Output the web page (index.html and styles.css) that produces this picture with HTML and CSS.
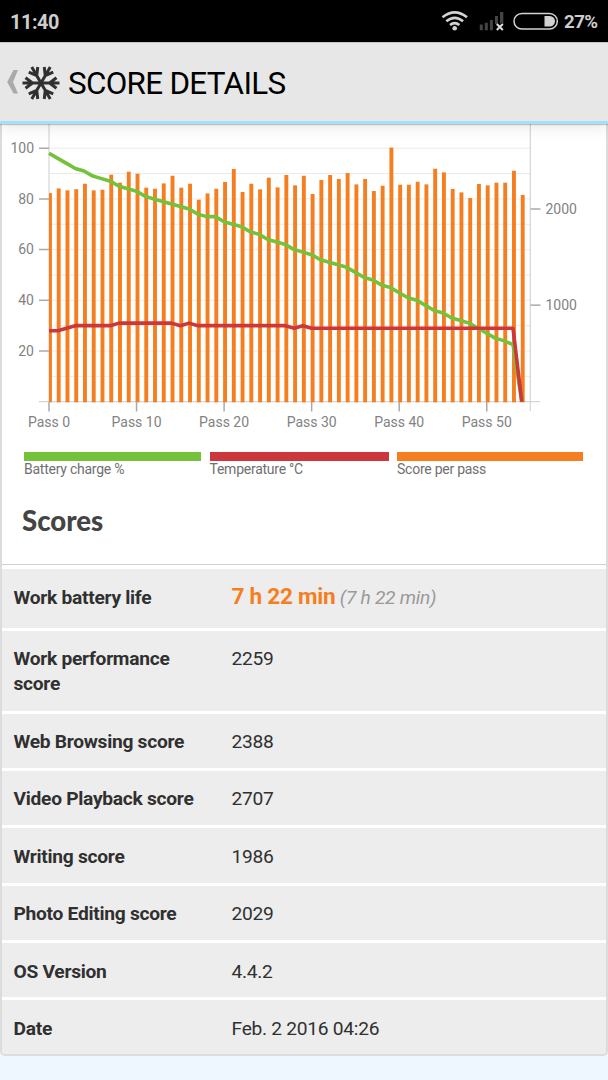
FILE: index.html
```html
<!DOCTYPE html>
<html lang="en">
<head>
    <meta charset="UTF-8">
    <meta name="viewport" content="width=device-width, initial-scale=1.0">
    <title>Score Details</title>
    <link rel="stylesheet" href="styles.css">
</head>
<body>
    <div class="status-bar">
        <span class="clock">11:40</span>
        <svg class="status-icons" width="130" height="42" viewBox="438 0 130 42">
            <g fill="none" stroke="#d2d2d2" stroke-width="2.6">
                <path d="M442.5 17.2Q454.7 7.4 467 17.2"/>
                <path d="M446.3 21.3Q454.7 14.3 463.1 21.3"/>
                <path d="M450 25Q454.7 21.2 459.4 25"/>
            </g>
            <circle cx="454.7" cy="28.3" r="2.3" fill="#d2d2d2"/>
            <path d="M479.8 24.5h3v5.7h-3zM484.8 22.7h3v7.5h-3zM489.9 20h3v10.2h-3zM495 16h3v8h-3zM500 12h3.3v18.2H500z" fill="#444"/>
            <path d="M496.8 24l6 6M502.8 24l-6 6" stroke="#000" stroke-width="4"/>
            <path d="M496.8 24l6 6M502.8 24l-6 6" stroke="#ddd" stroke-width="2"/>
            <rect x="514" y="13.4" width="43.3" height="15.6" rx="7.8" fill="none" stroke="#d2d2d2" stroke-width="1.5"/>
            <path d="M544.5 16h5.3a5.2 5.2 0 0 1 0 10.4h-5.3z" fill="#d2d2d2"/>
        </svg>
        <span class="battery">27%</span>
    </div>

    <div class="header">
        <svg class="back" width="14" height="26" viewBox="0 0 14 26"><path d="M7.5 1H12L7 13l5 11.5H7.5L1.2 13z" fill="#aaa"/></svg>
        <svg class="logo" width="38" height="36" viewBox="-19 -18 38 36">
            <defs>
                <g id="arm"><path d="M0 0H18.5M8.5 0L15.5 -5.2M8.5 0L15.5 5.2"/></g>
            </defs>
            <g fill="none" stroke="#303030" stroke-width="3">
                <use href="#arm"/>
                <use href="#arm" transform="rotate(60)"/>
                <use href="#arm" transform="rotate(120)"/>
                <use href="#arm" transform="rotate(180)"/>
                <use href="#arm" transform="rotate(240)"/>
                <use href="#arm" transform="rotate(300)"/>
            </g>
        </svg>
        <h1>SCORE DETAILS</h1>
    </div>

    <div class="card">
        <svg id="chart" class="chart" width="604" height="318" viewBox="2 124 604 318"></svg>
        <div class="legend">
            <div class="legend-item charge">Battery charge %</div>
            <div class="legend-item temperature">Temperature °C</div>
            <div class="legend-item score">Score per pass</div>
        </div>
        <h2>Scores</h2>
        <table class="scores">
            <tr class="first"><th>Work battery life</th><td><strong>7 h 22 min</strong> <em>(7 h 22 min)</em></td></tr>
            <tr class="tall"><th>Work performance score</th><td>2259</td></tr>
            <tr><th>Web Browsing score</th><td>2388</td></tr>
            <tr><th>Video Playback score</th><td>2707</td></tr>
            <tr><th>Writing score</th><td>1986</td></tr>
            <tr><th>Photo Editing score</th><td>2029</td></tr>
            <tr><th>OS Version</th><td>4.4.2</td></tr>
            <tr><th>Date</th><td>Feb. 2 2016 04:26</td></tr>
        </table>
    </div>
    <script src="chart.js"></script>
</body>
</html>
```
FILE: styles.css
```css
* {
    box-sizing: border-box;
}
body {
    margin: 0;
    min-height: 1080px;
    background: #eef6ff;
    font-family: Roboto, sans-serif;
    color: #303030;
}
.status-bar {
    height: 42px;
    background: #000;
    color: #cdcdcd;
    display: flex;
    align-items: center;
    padding: 2px 10px 0 10px;
}
.clock {
    font-size: 19.8px;
    font-weight: 700;
    letter-spacing: -0.4px;
}
.status-icons {
    margin: -2px 0 0 auto;
}
.battery {
    width: 34px;
    margin-left: -4px;
    font-size: 18.6px;
    font-weight: 700;
    letter-spacing: -0.5px;
    white-space: nowrap;
}
.header {
    position: relative;
    height: 82px;
    background: #e7e7e7;
    border-top: 1px solid #c4c4c4;
    border-bottom: 3px solid #a5e0fa;
    box-shadow: 0 1px 1px rgba(0, 0, 0, 0.2), 0 3px 14px rgba(0, 0, 0, 0.1);
    display: flex;
    align-items: center;
    padding-left: 6px;
}
.logo {
    margin: 1px 0 0 2px;
}
h1 {
    margin: 3px 0 0 8px;
    font-size: 31.4px;
    font-weight: 400;
    letter-spacing: -0.7px;
    color: #000;
}
.card {
    height: 932px;
    background: #fff;
    border: 2px solid #dcdcdc;
    border-top: 0;
    border-radius: 0 0 5px 5px;
    overflow: hidden;
}
.chart {
    display: block;
}
.grid {
    stroke: #ebebeb;
    stroke-width: 1;
}
.axis {
    stroke: #d5d5d5;
    stroke-width: 1.2;
}
.tick {
    stroke: #aaa;
    stroke-width: 1.5;
}
.bar {
    fill: #f57f20;
}
.line {
    fill: none;
    stroke-width: 3.6;
    stroke-linejoin: round;
}
.line-charge {
    stroke: #74c23a;
}
.line-temperature {
    stroke: #cb373a;
}
.chart text {
    fill: #828282;
    font-size: 14px;
}
.legend {
    display: grid;
    grid-template-columns: 177px 179px 186px;
    column-gap: 8.5px;
    padding: 10px 0 0 22px;
}
.legend-item {
    border-top: 9px solid;
    font-size: 14px;
    line-height: 17px;
    letter-spacing: -0.25px;
    color: #707070;
}
.charge {
    border-color: #74c23a;
}
.temperature {
    border-color: #cb373a;
}
.score {
    border-color: #f57f20;
}
h2 {
    height: 87px;
    margin: 0;
    padding: 26px 0 0 20px;
    border-bottom: 1px solid #d0d0d0;
    font-family: Lato, sans-serif;
    font-size: 27.6px;
    line-height: 34px;
    font-weight: 900;
    color: #444;
}
.scores {
    width: 100%;
    margin-top: 4px;
    border-collapse: collapse;
    table-layout: fixed;
    font-size: 19.2px;
    line-height: 25px;
    letter-spacing: -0.28px;
}
tr {
    height: 57.4px;
    border-bottom: 3px solid #fff;
    background: #ededed;
}
tr:last-child {
    border-bottom: 0;
}
.first {
    height: 60px;
}
.tall {
    height: 83px;
}
th, td {
    padding: 15.6px 0 0;
    text-align: left;
    vertical-align: top;
}
th {
    width: 217.5px;
    padding-left: 11.5px;
    padding-right: 20px;
    font-weight: 700;
}
td {
    padding-left: 12px;
}
.first td {
    padding-top: 15px;
}
td strong {
    font-size: 22.6px;
    color: #f57f20;
}
td em {
    color: #999;
}
```
FILE: chart.js
```js
const battery = [98, 96, 94, 92, 91, 89, 88, 87, 85, 84, 83, 81, 80, 79, 78, 77, 76, 74, 73, 73,
    71, 70, 69, 67, 66, 64, 63, 62, 60, 59, 58, 56, 55, 54, 53, 51, 49, 48, 46, 45,
    43, 41, 40, 38, 36, 35, 33, 32, 31, 29, 27, 25, 24, 22.5, 0];
const temperature = [28, 28, 29, 30, 30, 30, 30, 30, 31, 31, 31, 31, 31, 31, 31, 30, 31, 30, 30, 30,
    30, 30, 30, 30, 30, 30, 30, 30, 29, 30, 29, 29, 29, 29, 29, 29, 29, 29, 29, 29,
    29, 29, 29, 29, 29, 29, 29, 29, 29, 29, 29, 29, 29, 29, 0];
const scores = [2170, 2218, 2198, 2210, 2267, 2198, 2205, 2361, 2278, 2392, 2371, 2226, 2215, 2270, 2350,
    2226, 2267, 2101, 2166, 2215, 2285, 2420, 2181, 2267, 2208, 2330, 2229, 2358, 2250, 2350,
    2160, 2306, 2358, 2316, 2378, 2260, 2316, 2191, 2246, 2643, 2257, 2257, 2288, 2260, 2423,
    2385, 2212, 2177, 2118, 2264, 2250, 2278, 2278, 2402, 2150];

const bottom = 401.7;
const x = i => 49 + i * 8.755;
const y = v => bottom - v * 2.535;
const yScore = s => bottom - s / 10.4;

const line = (x1, y1, x2, y2, cls) => `<line x1="${x1}" y1="${y1}" x2="${x2}" y2="${y2}" class="${cls}"/>`;
const text = (tx, ty, anchor, value) => `<text x="${tx}" y="${ty}" text-anchor="${anchor}">${value}</text>`;
const series = (data, cls) => `<polyline class="line ${cls}" points="${data.map((v, i) => x(i) + ',' + y(v)).join(' ')}"/>`;

let svg = '';
for (let v = 10; v <= 100; v += 10) {
    svg += line(49, y(v), 530, y(v), 'grid');
}
svg += line(39, bottom, 540, bottom, 'axis');
svg += line(49, 124, 49, bottom, 'axis') + line(530.3, 124, 530.3, 411, 'axis');

scores.forEach((s, i) => {
    const left = Math.max(49, x(i) - 1);
    svg += `<rect class="bar" x="${left}" y="${yScore(s)}" width="${x(i) + 2.9 - left}" height="${402.3 - yScore(s)}"/>`;
});

for (let v = 20; v <= 100; v += 20) {
    svg += line(39, y(v), 49, y(v), 'tick') + text(34, y(v) + 4.8, 'end', v);
}
for (let s = 1000; s <= 2000; s += 1000) {
    svg += line(530.5, yScore(s) - 0.4, 540.5, yScore(s) - 0.4, 'tick') + text(545.5, yScore(s) + 4.9, 'start', s);
}
for (let i = 0; i <= 50; i += 10) {
    svg += line(x(i), bottom, x(i), 411.5, 'tick') + text(x(i), 427, 'middle', 'Pass ' + i);
}
svg += series(battery, 'line-charge') + series(temperature, 'line-temperature');
document.getElementById('chart').innerHTML = svg;
```
